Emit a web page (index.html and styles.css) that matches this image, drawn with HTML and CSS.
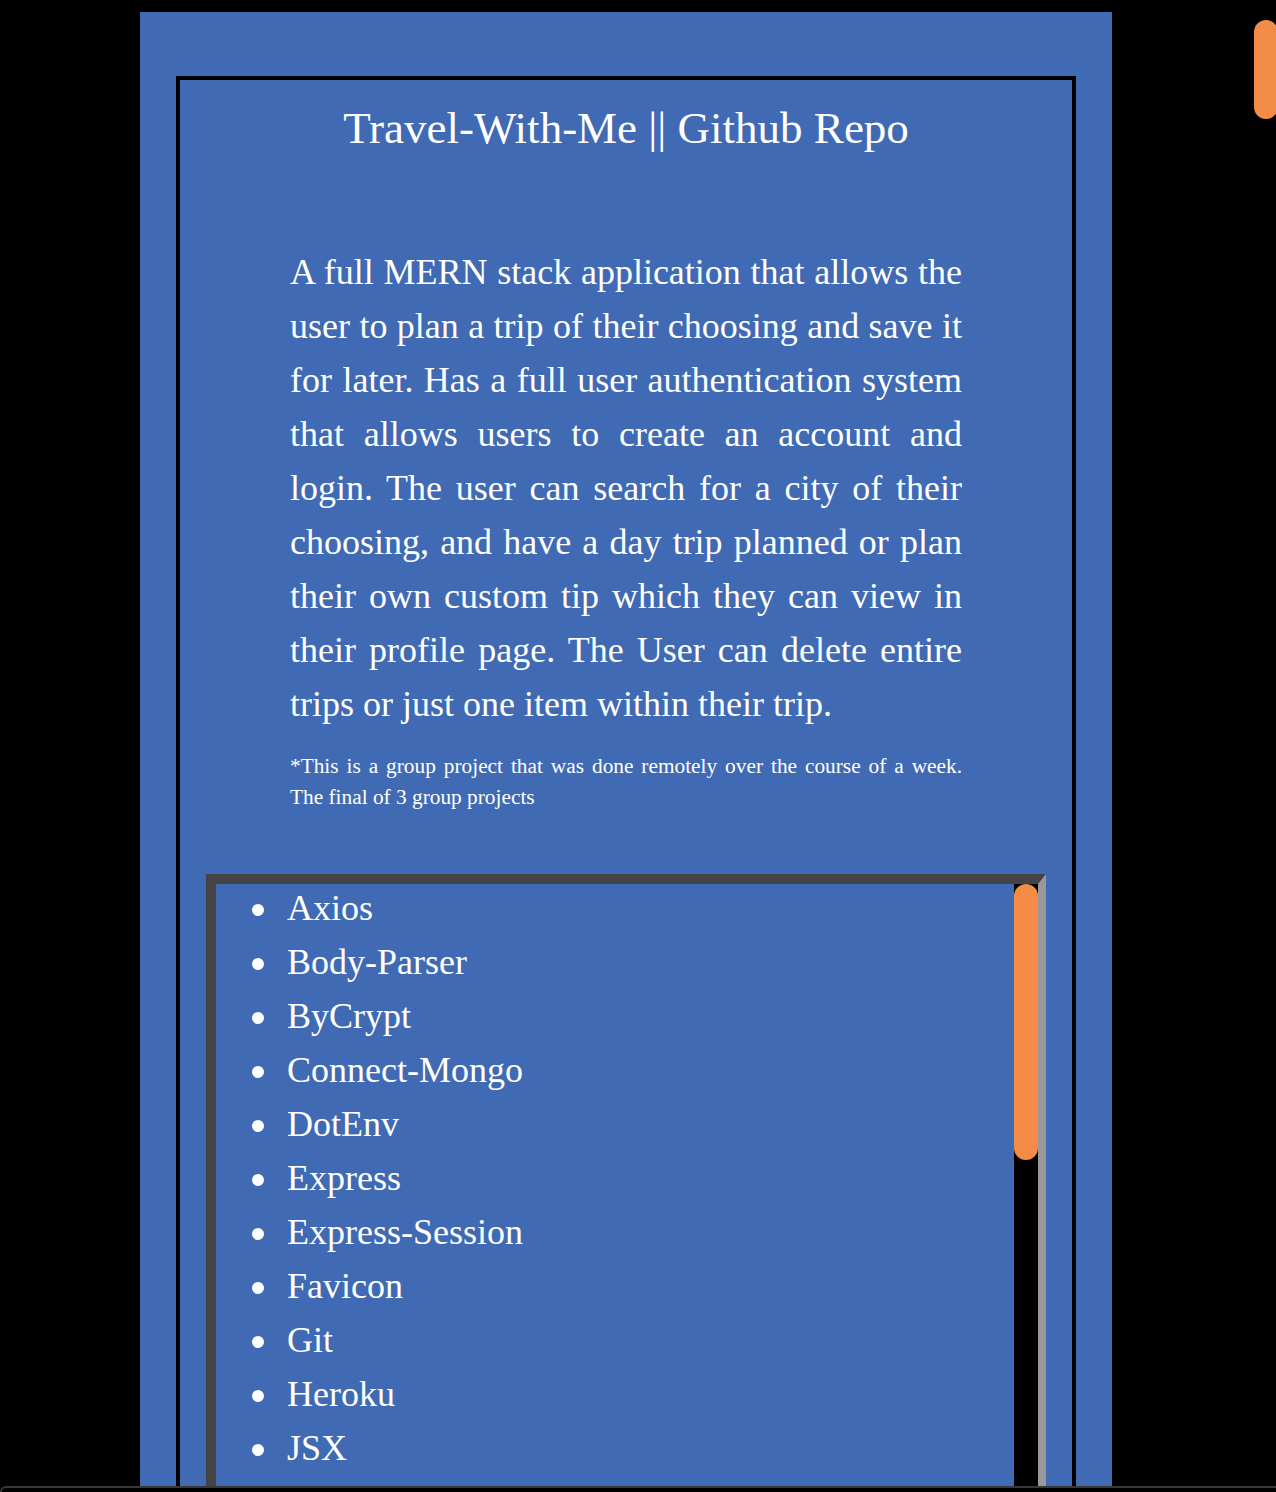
FILE: index.html
```html
<!DOCTYPE html>
<html lang="en">
<head>
<meta charset="utf-8">
<title>Travel-With-Me</title>
<link rel="stylesheet" href="styles.css">
</head>
<body>
<main class="panel">
  <section class="card">
    <h1 class="title">Travel-With-Me || Github Repo</h1>
    <p class="desc">A full MERN stack application that allows the user to plan a trip of their choosing and save it for later. Has a full user authentication system that allows users to create an account and login. The user can search for a city of their choosing, and have a day trip planned or plan their own custom tip which they can view in their profile page. The User can delete entire trips or just one item within their trip.</p>
    <p class="note">*This is a group project that was done remotely over the course of a week. The final of 3 group projects</p>
    <div class="techbox">
      <ul class="techlist">
        <li>Axios</li>
        <li>Body-Parser</li>
        <li>ByCrypt</li>
        <li>Connect-Mongo</li>
        <li>DotEnv</li>
        <li>Express</li>
        <li>Express-Session</li>
        <li>Favicon</li>
        <li>Git</li>
        <li>Heroku</li>
        <li>JSX</li>
      </ul>
      <div class="track"><div class="thumb"></div></div>
    </div>
  </section>
</main>
<div class="page-thumb"></div>
<div class="frame-edge"></div>
</body>
</html>
```

FILE: styles.css
```css
html, body {
  margin: 0;
  padding: 0;
  height: 1492px;
  overflow: hidden;
  background: #000;
}

body {
  font-family: "Liberation Serif", "Times New Roman", serif;
  color: #fff;
}

.panel {
  margin: 12px 0 0 140px;
  width: 972px;
  height: 1600px;
  box-sizing: border-box;
  padding: 64px 36px 0;
  background: #416ab4;
}

.card {
  border: 4px solid #000;
  padding-top: 23px;
  height: 1600px;
}

.title {
  margin: 0;
  font-size: 45px;
  font-weight: normal;
  line-height: 51px;
  text-align: center;
}

.desc {
  width: 672px;
  margin: 91px auto 0;
  font-size: 36px;
  line-height: 54px;
  text-align: justify;
}

.note {
  width: 672px;
  margin: 20px auto 0;
  font-size: 21.33px;
  line-height: 31px;
  text-align: justify;
}

.techbox {
  display: flex;
  margin: 61px 26px 0;
  height: 800px;
  border-style: solid;
  border-width: 10px 8px 10px 10px;
  border-color: #444 #999 #999 #444;
  overflow: hidden;
}

.techlist {
  flex: 1;
  margin: -3px 0 0;
  padding: 0 0 0 71px;
  list-style: none;
  font-size: 36px;
  line-height: 54px;
}

.techlist li::before {
  content: "";
  display: inline-block;
  width: 12px;
  height: 12px;
  margin: 0 23px 0 -35px;
  border-radius: 50%;
  background: #fff;
  vertical-align: 4px;
}

.track {
  width: 24px;
  background: #000;
}

.thumb {
  height: 276px;
  border-radius: 12px;
  background: #f28c46;
}

.page-thumb {
  position: fixed;
  top: 20px;
  right: -2px;
  width: 24px;
  height: 99px;
  border-radius: 12px;
  background: #f28c46;
}

.frame-edge {
  position: fixed;
  left: 0;
  right: 0;
  bottom: 0;
  height: 4px;
  background: #000;
  border-top: 2px solid rgba(255, 255, 255, 0.22);
  border-left: 2px solid rgba(255, 255, 255, 0.22);
  border-top-left-radius: 10px;
}
```
